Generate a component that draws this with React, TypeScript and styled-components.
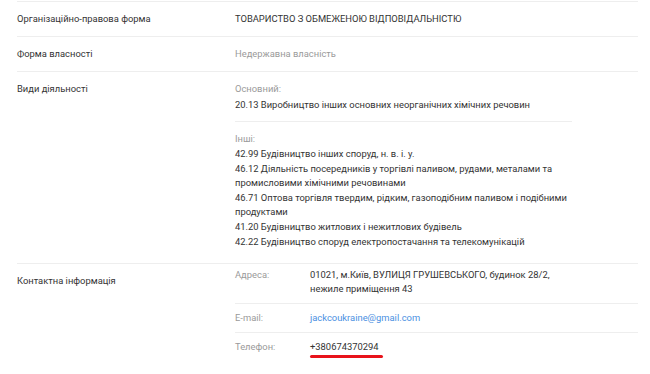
import React from "react";
import { styled, createGlobalStyle } from "styled-components";

const GlobalStyle = createGlobalStyle`
  body {
    margin: 0;
    background: #fff;
    font-family: Roboto, "Noto Sans", Arial, sans-serif;
    font-size: 9.4px;
    color: #333;
  }
`;

const Wrapper = styled.section`
  padding: 1px 12px 0 17px;
  width: 621px;
`;

const Row = styled.div`
  display: flex;
  border-top: 1px solid #eee;
`;

const Label = styled.div`
  flex: 0 0 218px;
  line-height: 15px;
  padding: 9px 0 10px;
`;

const Value = styled.div<{ $muted?: boolean; $pad?: string }>`
  flex: 1;
  line-height: 15px;
  padding: ${(p) => p.$pad ?? "9px 0 10px"};
  color: ${(p) => (p.$muted ? "#9a9a9a" : "#333")};
`;

const Block = styled.div<{ $last?: boolean }>`
  width: 337px;
  padding: ${(p) => (p.$last ? "9px 0 14px" : "0 0 9px")};
  border-bottom: ${(p) => (p.$last ? "none" : "1px solid #eee")};
`;

const SubTitle = styled.div`
  color: #9a9a9a;
  line-height: 15px;
  margin-bottom: 1px;
`;

const ActivityList = styled.ul`
  list-style: none;
  margin: 0;
  padding: 0;
  display: flex;
  flex-direction: column;
  gap: 1px;
`;

const Activity = styled.li`
  line-height: 14px;
`;

const ContactRow = styled.div<{ $first?: boolean; $last?: boolean }>`
  display: flex;
  line-height: 14px;
  padding: ${(p) => (p.$first ? "4px 0 7px" : "7px 0")};
  border-bottom: ${(p) => (p.$last ? "none" : "1px solid #eee")};
`;

const ContactKey = styled.div`
  flex: 0 0 75px;
  color: #9a9a9a;
`;

const ContactVal = styled.div`
  flex: 1;
`;

const Mail = styled.a`
  color: #4a90e2;
  text-decoration: none;
`;

const Phone = styled.span`
  position: relative;
  &::after {
    content: "";
    position: absolute;
    left: 0;
    right: -4px;
    top: 14px;
    height: 3px;
    border-radius: 2px;
    background: #e8131b;
  }
`;

const others = [
  "42.99 Будівництво інших споруд, н. в. і. у.",
  "46.12 Діяльність посередників у торгівлі паливом, рудами, металами та промисловими хімічними речовинами",
  "46.71 Оптова торгівля твердим, рідким, газоподібним паливом і подібними продуктами",
  "41.20 Будівництво житлових і нежитлових будівель",
  "42.22 Будівництво споруд електропостачання та телекомунікацій",
];

export default function App() {
  return (
    <Wrapper>
      <GlobalStyle />
      <Row>
        <Label>Організаційно-правова форма</Label>
        <Value>ТОВАРИСТВО З ОБМЕЖЕНОЮ ВІДПОВІДАЛЬНІСТЮ</Value>
      </Row>
      <Row>
        <Label>Форма власності</Label>
        <Value $muted>Недержавна власність</Value>
      </Row>
      <Row>
        <Label>Види діяльності</Label>
        <Value $pad="9px 0 0">
          <Block>
            <SubTitle>Основний:</SubTitle>
            <div>20.13 Виробництво інших основних неорганічних хімічних речовин</div>
          </Block>
          <Block $last>
            <SubTitle>Інші:</SubTitle>
            <ActivityList>
              {others.map((a) => (
                <Activity key={a}>{a}</Activity>
              ))}
            </ActivityList>
          </Block>
        </Value>
      </Row>
      <Row>
        <Label>Контактна інформація</Label>
        <Value $pad="0">
          <ContactRow $first>
            <ContactKey>Адреса:</ContactKey>
            <ContactVal>
              01021, м.Київ, ВУЛИЦЯ ГРУШЕВСЬКОГО, будинок 28/2,
              <br />
              нежиле приміщення 43
            </ContactVal>
          </ContactRow>
          <ContactRow>
            <ContactKey>E-mail:</ContactKey>
            <ContactVal>
              <Mail href="#">jackcoukraine@gmail.com</Mail>
            </ContactVal>
          </ContactRow>
          <ContactRow $last>
            <ContactKey>Телефон:</ContactKey>
            <ContactVal>
              <Phone>+380674370294</Phone>
            </ContactVal>
          </ContactRow>
        </Value>
      </Row>
    </Wrapper>
  );
}
